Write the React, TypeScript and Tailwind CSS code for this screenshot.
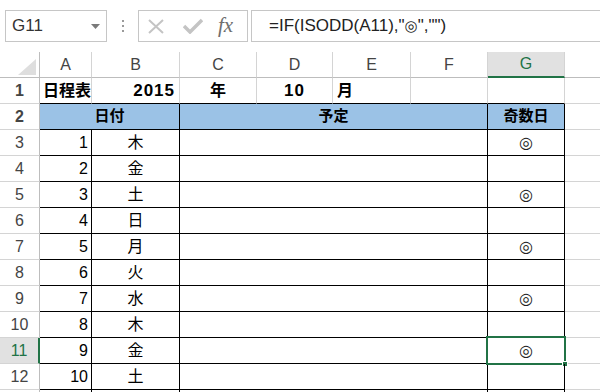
import React from 'react';

const font = { fontFamily: '"Liberation Sans", "Noto Sans CJK JP", sans-serif' };
const circleFont = { fontFamily: '"DejaVu Sans", sans-serif' };
const days = ['木', '金', '土', '日', '月', '火', '水', '木', '金', '土'];
const cols = ['A', 'B', 'C', 'D', 'E', 'F', 'G'];
const widths = ['w-[52px]', 'w-[88px]', 'w-[77px]', 'w-[76px]', 'w-[78px]', 'w-[77px]', 'w-[77px]'];

function FormulaBar() {
  return (
    <div className="flex h-[52px] items-start pt-[10px] pl-[5px]">
      <div className="flex h-[32px] w-[102px] items-center border border-[#c6c6c6] pl-[6px] text-[17px] text-[#333]">
        <span className="flex-1">G11</span>
        <svg width="9" height="5" className="mr-[6px]">
          <polygon points="0,0 9,0 4.5,5" fill="#7a7a7a" />
        </svg>
      </div>
      <div className="flex h-[32px] w-[31px] flex-col items-center justify-center gap-[3px]">
        <span className="h-[2px] w-[2px] bg-[#9a9a9a]" />
        <span className="h-[2px] w-[2px] bg-[#9a9a9a]" />
        <span className="h-[2px] w-[2px] bg-[#9a9a9a]" />
      </div>
      <div className="flex h-[32px] w-[110px] items-center border border-[#c6c6c6]">
        <svg width="16" height="15" className="ml-[9px]">
          <path d="M1 1 L15 14 M15 1 L1 14" stroke="#c4c4c4" strokeWidth="2" />
        </svg>
        <svg width="20" height="16" className="ml-[19px]">
          <path d="M1 8 L7 14 L19 2" stroke="#c4c4c4" strokeWidth="3.5" fill="none" />
        </svg>
        <span
          className="ml-[15px] text-[21px] italic text-[#6e6e6e]"
          style={{ fontFamily: '"Liberation Serif", serif' }}
        >
          fx
        </span>
      </div>
      <div className="ml-[3px] flex h-[32px] flex-1 items-center border border-r-0 border-[#c6c6c6] pl-[17px] text-[17px] text-[#222]">
        =IF(ISODD(A11),"<span className="text-[15px] font-bold" style={circleFont}>◎</span>","")
      </div>
    </div>
  );
}

function HeaderRow() {
  return (
    <div className="flex h-[26px]">
      <div className="relative w-[40px] shrink-0 border-r border-b border-[#bdbdbd]">
        <svg width="18" height="16" className="absolute right-[3px] bottom-[2px]">
          <polygon points="18,0 18,16 0,16" fill="#dedede" />
        </svg>
      </div>
      {cols.map((c, i) => (
        <div
          key={c}
          className={`${widths[i]} shrink-0 flex items-center justify-center border-r text-[16px] ${
            c === 'G'
              ? 'bg-[#e1e1e1] border-b-2 border-b-[#217346] border-r-[#d4d4d4] text-[#217346]'
              : 'border-b border-[#d4d4d4] border-b-[#bdbdbd] text-[#444]'
          }`}
        >
          {c}
        </div>
      ))}
      <div className="flex-1 border-b border-[#bdbdbd]" />
    </div>
  );
}

function RowHead({ n, label = true }: { n: number; label?: boolean }) {
  const sel = n === 11;
  return (
    <div
      className={`flex w-[40px] shrink-0 items-center justify-center border-b border-b-[#d4d4d4] text-[16px] ${
        sel
          ? 'bg-[#e1e1e1] border-r-2 border-r-[#217346] text-[#217346]'
          : 'border-r border-r-[#bdbdbd] text-[#444]'
      }`}
    >
      {label ? n : ''}
    </div>
  );
}

function Row1() {
  return (
    <div className="flex h-[26px] text-[16px] font-bold text-black">
      <RowHead n={1} />
      <div className="z-10 w-[52px] shrink-0 whitespace-nowrap border-r border-b border-r-[#d4d4d4] border-b-black pl-[3px] leading-[26px]">
        日程表
      </div>
      <div className="w-[88px] shrink-0 border-r border-b border-r-[#d4d4d4] border-b-black pr-[4px] text-right text-[17px] leading-[26px] tracking-[1px]">
        2015
      </div>
      <div className="w-[77px] shrink-0 border-r border-b border-r-[#d4d4d4] border-b-black text-center leading-[26px]">
        年
      </div>
      <div className="w-[76px] shrink-0 border-r border-b border-r-[#d4d4d4] border-b-black text-center text-[17px] leading-[26px] tracking-[1px]">
        10
      </div>
      <div className="w-[78px] shrink-0 border-r border-b border-r-[#d4d4d4] border-b-black pl-[4px] leading-[26px]">
        月
      </div>
      <div className="w-[77px] shrink-0 border-r border-b border-r-[#d4d4d4] border-b-black" />
      <div className="w-[77px] shrink-0 border-r border-b border-r-[#d4d4d4] border-b-black" />
      <div className="flex-1 border-b border-[#d4d4d4]" />
    </div>
  );
}

function Row2() {
  return (
    <div className="flex h-[26px] text-[15px] font-bold text-black">
      <RowHead n={2} />
      <div className="flex w-[140px] shrink-0 items-center justify-center border-r border-b border-black bg-[#9bc2e6]">
        日付
      </div>
      <div className="flex w-[308px] shrink-0 items-center justify-center border-r border-b border-black bg-[#9bc2e6]">
        予定
      </div>
      <div className="flex w-[77px] shrink-0 items-center justify-center border-r border-b border-black bg-[#9bc2e6]">
        奇数日
      </div>
      <div className="flex-1 border-b border-[#d4d4d4]" />
    </div>
  );
}

function DataRow({ n }: { n: number }) {
  const d = n - 2;
  const odd = d % 2 === 1;
  const sel = n === 11;
  return (
    <div className="flex h-[26px] text-[16px] text-black">
      <RowHead n={n} />
      <div className="w-[52px] shrink-0 border-r border-b border-black pr-[3px] text-right leading-[26px]">
        {d}
      </div>
      <div className="w-[88px] shrink-0 border-r border-b border-black text-center leading-[26px]">
        {days[d - 1]}
      </div>
      <div className="w-[308px] shrink-0 border-r border-b border-black" />
      <div className="relative flex w-[77px] shrink-0 items-center justify-center border-r border-b border-black">
        {odd && (
          <span className="text-[16px] font-bold leading-none text-[#222]" style={circleFont}>
            ◎
          </span>
        )}
        {sel && (
          <>
            <div className="absolute left-[-2px] top-[-2px] h-[29px] w-[80px] border-2 border-[#217346]" />
            <div className="absolute right-[-4px] bottom-[-4px] h-[6px] w-[6px] border border-white bg-[#217346]" />
          </>
        )}
      </div>
      <div className="flex-1 border-b border-[#d4d4d4]" />
    </div>
  );
}

function EmptyRow({ n }: { n: number }) {
  return (
    <div className="flex h-[26px] text-[16px]">
      <RowHead n={n} label={false} />
      <div className="w-[52px] shrink-0 border-r border-b border-black" />
      <div className="w-[88px] shrink-0 border-r border-b border-black" />
      <div className="w-[308px] shrink-0 border-r border-b border-black" />
      <div className="w-[77px] shrink-0 border-r border-b border-black" />
      <div className="flex-1 border-b border-[#d4d4d4]" />
    </div>
  );
}

export default function App() {
  const rows = [3, 4, 5, 6, 7, 8, 9, 10, 11, 12];
  return (
    <div className="h-[392px] w-[600px] overflow-hidden bg-white" style={font}>
      <FormulaBar />
      <HeaderRow />
      <Row1 />
      <Row2 />
      {rows.map((n) => (
        <DataRow key={n} n={n} />
      ))}
      <EmptyRow n={13} />
    </div>
  );
}
